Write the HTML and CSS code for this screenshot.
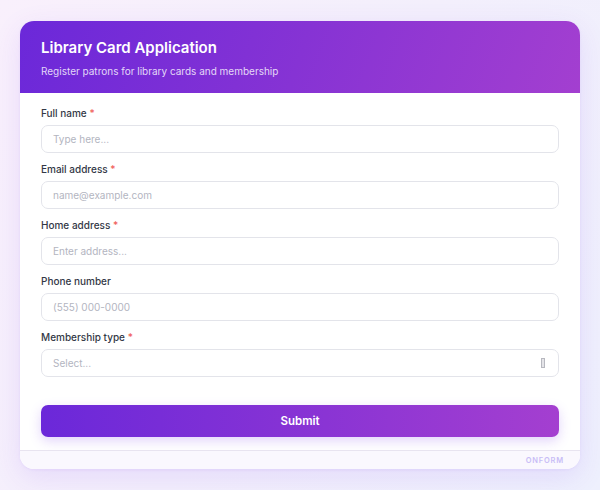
FILE: index.html
```html
<!DOCTYPE html>
<html>
<head>
<meta charset="utf-8">
<link rel="stylesheet" href="styles.css">
</head>
<body>
<div class="card">
  <div class="header">
    <h1 class="title">Library Card Application</h1>
    <p class="subtitle">Register patrons for library cards and membership</p>
  </div>
  <form class="body">
    <div class="field">
      <label class="label">Full name <span class="req">*</span></label>
      <div class="input"><span class="ph">Type here...</span></div>
    </div>
    <div class="field">
      <label class="label">Email address <span class="req">*</span></label>
      <div class="input"><span class="ph">name@example.com</span></div>
    </div>
    <div class="field">
      <label class="label">Home address <span class="req">*</span></label>
      <div class="input"><span class="ph">Enter address...</span></div>
    </div>
    <div class="field">
      <label class="label">Phone number</label>
      <div class="input"><span class="ph">(555) 000-0000</span></div>
    </div>
    <div class="field">
      <label class="label">Membership type <span class="req">*</span></label>
      <div class="input select"><span class="ph">Select...</span><span class="caret"></span></div>
    </div>
    <div class="submit">Submit</div>
  </form>
  <div class="footer"><span class="brand">ONFORM</span></div>
</div>
</body>
</html>
```
FILE: styles.css
```css
* { box-sizing: border-box; }
html, body { margin: 0; padding: 0; }
body {
  width: 600px;
  height: 490px;
  overflow: hidden;
  font-family: Inter, "Noto Sans", sans-serif;
  background: linear-gradient(120deg, #f9f0fc 0%, #f3effc 50%, #eef0fd 100%);
  padding: 21px 20px 0;
}
.card {
  width: 560px;
  height: 448px;
  background: #fff;
  border-radius: 14px;
  overflow: hidden;
  box-shadow: 0 8px 28px rgba(124, 58, 237, 0.12), 0 1px 3px rgba(124, 58, 237, 0.08);
  display: flex;
  flex-direction: column;
}
.header {
  height: 72px;
  padding: 17px 21px 0;
  background: linear-gradient(110deg, #6b28d9 0%, #8633d4 50%, #a33fd0 100%);
  color: #fff;
}
.title {
  margin: 0;
  font-size: 15px;
  font-weight: 600;
  line-height: 20px;
}
.subtitle {
  margin: 7px 0 0;
  font-size: 10px;
  line-height: 13px;
  color: rgba(255, 255, 255, 0.82);
}
.body {
  flex: 1;
  margin: 0;
  padding: 13px 21px 13px;
  display: flex;
  flex-direction: column;
}
.field {
  display: flex;
  flex-direction: column;
  gap: 5px;
  margin-bottom: 9px;
}
.label {
  font-size: 10px;
  font-weight: 500;
  line-height: 14px;
  color: #333846;
}
.req { color: #f0605a; }
.input {
  height: 28px;
  border: 1.5px solid #e3e4ea;
  border-radius: 7px;
  padding: 0 11px;
  display: flex;
  align-items: center;
  font-size: 10px;
}
.ph { color: #b3b5bf; }
.select { justify-content: space-between; }
.caret {
  width: 4px;
  height: 10px;
  border: 1px solid #b7b8bf;
  background: #e4e4e8;
  margin-right: 2px;
}
.submit {
  margin-top: 19px;
  height: 32px;
  border-radius: 7px;
  background: linear-gradient(90deg, #6b28d9 0%, #8a34d4 55%, #a43fd0 100%);
  color: #fff;
  font-size: 11.5px;
  font-weight: 600;
  display: flex;
  align-items: center;
  justify-content: center;
  box-shadow: 0 4px 12px rgba(124, 58, 237, 0.22);
}
.footer {
  height: 19px;
  border-top: 1px solid #e8e4f0;
  background: #faf8fe;
  display: flex;
  align-items: center;
  justify-content: flex-end;
  padding-right: 16px;
}
.brand {
  font-size: 7.5px;
  font-weight: 600;
  letter-spacing: 0.8px;
  color: #c8bdf6;
}
```
